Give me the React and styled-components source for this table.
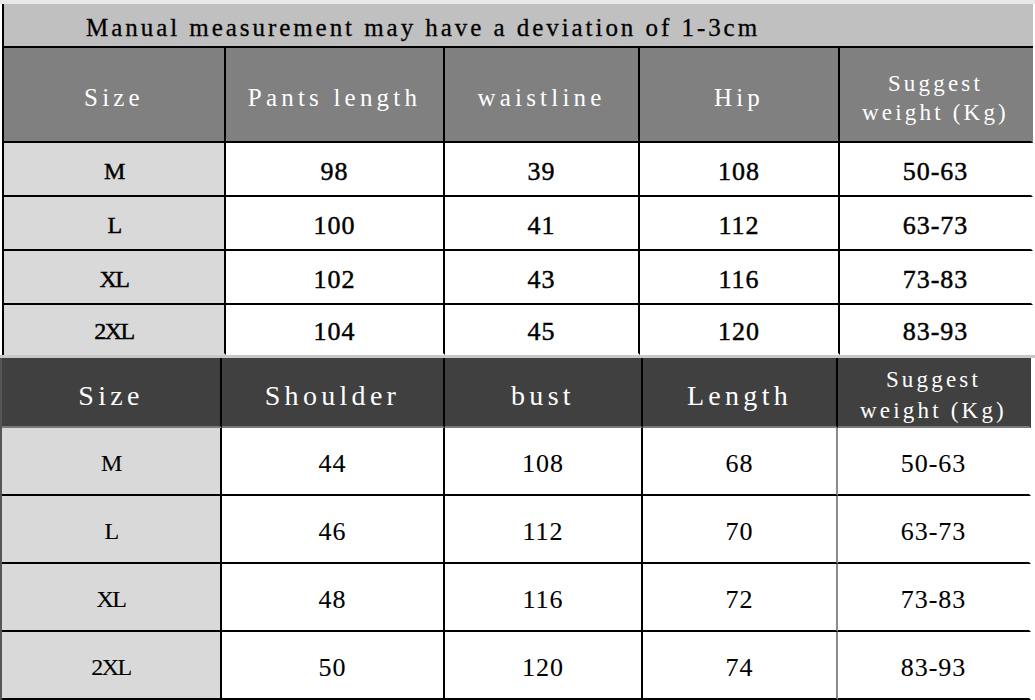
import React from "react";
import styled, { createGlobalStyle } from "styled-components";

const Global = createGlobalStyle`
  html, body { margin: 0; padding: 0; background: #fff; }
  body { width: 1035px; height: 700px; overflow: hidden; }
`;

const Page = styled.div`
  width: 1035px;
  height: 700px;
  background: #fff;
  display: flex;
  flex-direction: column;
`;

const TopStrip = styled.div`
  height: 4px;
  background: #e8e8e8;
`;

const Table = styled.div`
  display: grid;
  grid-template-columns: ${(p) => p.$cols};
  margin-left: ${(p) => p.$ml}px;
  border-left: 2px solid ${(p) => p.$lb};
  border-right: 2px solid ${(p) => p.$rb};
  width: ${(p) => p.$w}px;
`;

const Title = styled.div`
  grid-column: 1 / -1;
  height: 44px;
  box-sizing: border-box;
  padding: 5px 0 0 82px;
  background: #c0c0c0;
  border-bottom: 2px solid #000;
  display: flex;
  align-items: center;
  font-family: "Liberation Serif", serif;
  font-size: 25px;
  letter-spacing: 2.95px;
  color: #000;
  -webkit-text-stroke: 0.3px #000;
  white-space: nowrap;
`;

const Head = styled.div`
  height: ${(p) => p.$h}px;
  box-sizing: border-box;
  padding-top: 6px;
  background: ${(p) => p.$bg};
  border-right: 2px solid ${(p) => (p.$last ? "transparent" : "#000")};
  border-bottom: 2px solid ${(p) => p.$bb};
  display: flex;
  flex-direction: column;
  align-items: center;
  justify-content: center;
  font-family: "Liberation Serif", serif;
  font-size: ${(p) => p.$fs}px;
  line-height: ${(p) => p.$lh}px;
  letter-spacing: ${(p) => p.$ls}px;
  color: #fff;
  white-space: nowrap;
`;

const Cell = styled.div`
  height: ${(p) => p.$h}px;
  box-sizing: border-box;
  padding-top: 5px;
  background: ${(p) => (p.$size ? "#d9d9d9" : "#fff")};
  border-right: 2px solid ${(p) => (p.$last ? "transparent" : p.$rc || "#000")};
  border-bottom: 2px solid ${(p) => (p.$nob ? "transparent" : "#000")};
  display: flex;
  align-items: center;
  justify-content: center;
  font-family: "Liberation Serif", serif;
  font-size: ${(p) => (p.$size ? 24 : 26)}px;
  letter-spacing: ${(p) => (p.$size ? "-1.5px" : "1px")};
  color: #000;
  -webkit-text-stroke: ${(p) => p.$stroke}px #000;
`;

const Gap = styled.div`
  height: 3px;
  background: #c8c8c8;
`;

const rows1 = [
  ["M", "98", "39", "108", "50-63"],
  ["L", "100", "41", "112", "63-73"],
  ["XL", "102", "43", "116", "73-83"],
  ["2XL", "104", "45", "120", "83-93"],
];

const rows2 = [
  ["M", "44", "108", "68", "50-63"],
  ["L", "46", "112", "70", "63-73"],
  ["XL", "48", "116", "72", "73-83"],
  ["2XL", "50", "120", "74", "83-93"],
];

const Suggest = () => (
  <>
    <span>Suggest</span>
    <span>weight (Kg)</span>
  </>
);

export default function App() {
  const heads1 = ["Size", "Pants length", "waistline", "Hip"];
  const heads2 = ["Size", "Shoulder", "bust", "Length"];
  return (
    <Page>
      <Global />
      <TopStrip />
      <Table
        $cols="222px 219px 195px 200px 193px"
        $ml={2}
        $lb="#000"
        $rb="#777"
        $w={1033}
      >
        <Title>Manual measurement may have a deviation of 1-3cm</Title>
        {heads1.map((h) => (
          <Head key={h} $h={95} $bg="#808080" $bb="#000" $fs={25} $lh={29} $ls={4.2}>
            {h}
          </Head>
        ))}
        <Head $h={95} $bg="#808080" $bb="#000" $fs={23} $lh={29} $ls={3.2} $last>
          <Suggest />
        </Head>
        {rows1.map((r, ri) =>
          r.map((v, ci) => (
            <Cell
              key={ri + "-" + ci}
              $h={ri === 3 ? 50 : 54}
              $size={ci === 0}
              $last={ci === 4}
              $nob={ri === 3}
              $stroke={0.45}
            >
              {v}
            </Cell>
          ))
        )}
      </Table>
      <Gap />
      <Table
        $cols="220px 223px 198px 195px 193px"
        $ml={0}
        $lb="#555"
        $rb="#000"
        $w={1035}
      >
        {heads2.map((h) => (
          <Head key={h} $h={70} $bg="#404040" $bb="#7a7a7a" $fs={28} $lh={31} $ls={4.3}>
            {h}
          </Head>
        ))}
        <Head $h={70} $bg="#404040" $bb="#7a7a7a" $fs={23} $lh={31} $ls={3.2} $last>
          <Suggest />
        </Head>
        {rows2.map((r, ri) =>
          r.map((v, ci) => (
            <Cell
              key={ri + "-" + ci}
              $h={68}
              $size={ci === 0}
              $last={ci === 4}
              $rc={ci === 3 ? "#8a8a8a" : "#000"}
              $stroke={0.1}
            >
              {v}
            </Cell>
          ))
        )}
      </Table>
    </Page>
  );
}
